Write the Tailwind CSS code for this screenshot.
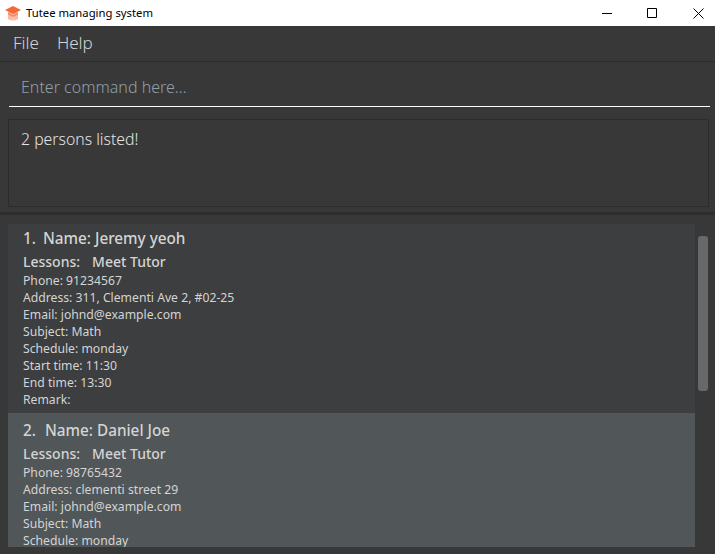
<!DOCTYPE html>
<html lang="en">
<head>
  <meta charset="UTF-8" />
  <title>Tutee managing system</title>
  <script src="https://cdn.jsdelivr.net/npm/@tailwindcss/browser@4"></script>
</head>
<body class="font-['Noto_Sans','Open_Sans',sans-serif] bg-[#383838] overflow-hidden">
  <div class="h-[554px] w-[715px] flex flex-col overflow-hidden">
    <!-- Title bar -->
    <div class="h-[26px] bg-white flex items-center shrink-0">
      <svg class="ml-[5px] w-[16px] h-[17px]" viewBox="0 0 16 17">
        <path d="M3 7h10v7q-5 3-10 0z" fill="#f9b9a2"/>
        <path d="M7.500 9h1v7h-1z" fill="#fbd3c4"/>
        <path d="M0 5L8 1 16 5 8 9z" fill="#f4683a"/>
        <path d="M3 7.500L8 10l5-2.500v2L8 12 3 9.500z" fill="#f58a66"/>
      </svg>
      <span class="ml-[5px] text-[11.3px] text-black leading-none">Tutee managing system</span>
      <div class="ml-auto flex items-center">
        <svg class="w-[10px] h-[10px] mr-[35px]" viewBox="0 0 10 10"><path d="M0 5.500h10" stroke="#000" fill="none"/></svg>
        <svg class="w-[10px] h-[10px] mr-[36px]" viewBox="0 0 10 10"><path d="M.5.5h9v9h-9z" stroke="#000" fill="none"/></svg>
        <svg class="w-[11px] h-[11px] mr-[11px]" viewBox="0 0 11 11"><path d="M.5.5l10 10M10.500.5l-10 10" stroke="#000" fill="none"/></svg>
      </div>
    </div>

    <!-- Menu -->
    <div class="h-[36px] shrink-0 flex items-center gap-[18px] pl-[13px] pb-px text-[17px] font-light text-[#d4d4d4] border-b border-[#2c2c2c]">
      <span>File</span>
      <span>Help</span>
    </div>

    <!-- Command box -->
    <div class="h-[45px] shrink-0 ml-[9px] mr-[5px] border-b border-white flex items-center pl-[12px] pt-[5px] text-[16px] font-light text-[#8fa0aa]">
      Enter command here...
    </div>

    <!-- Result box -->
    <div class="h-[88px] shrink-0 mt-[12px] ml-[8px] mr-[6px] border border-[#2c2c2c] pl-[12px] pt-[7px] text-[15.8px] font-light leading-[24px] text-[#e4e4e4]">
      2 persons listed!
    </div>
    <div class="h-[3px] mt-[5px] shrink-0 bg-[#2e2e2e]"></div>

    <!-- Person list -->
    <div class="relative mt-[9px] h-[323px] overflow-hidden shrink-0">
      <div class="ml-[8px] w-[687px] h-[323px] overflow-hidden">
        <div class="h-[189px] bg-[#3c3e3f] pl-[15px] pt-[3px] text-[#d4d4d4]">
          <div class="flex gap-[7px] h-[23px] text-[15.3px] font-medium leading-[22px]"><span>1.</span><span>Name: Jeremy yeoh</span></div>
          <div class="flex gap-[12px] h-[22px] text-[14px] font-medium leading-[24px]"><span>Lessons:</span><span>Meet Tutor</span></div>
          <div class="text-[12.2px] leading-[17px]">
            <p>Phone: 91234567</p>
            <p>Address: 311, Clementi Ave 2, #02-25</p>
            <p>Email: johnd@example.com</p>
            <p>Subject: Math</p>
            <p>Schedule: monday</p>
            <p>Start time: 11:30</p>
            <p>End time: 13:30</p>
            <p>Remark:</p>
          </div>
        </div>
        <div class="h-[134px] overflow-hidden bg-[#515658] pl-[15px] pt-[6px] text-[#d4d4d4]">
          <div class="flex gap-[9px] h-[23px] text-[15.3px] font-medium leading-[22px]"><span>2.</span><span>Name: Daniel Joe</span></div>
          <div class="flex gap-[12px] h-[22px] text-[14px] font-medium leading-[24px]"><span>Lessons:</span><span>Meet Tutor</span></div>
          <div class="text-[12.2px] leading-[17px]">
            <p>Phone: 98765432</p>
            <p>Address: clementi street 29</p>
            <p>Email: johnd@example.com</p>
            <p>Subject: Math</p>
            <p>Schedule: monday</p>
          </div>
        </div>
      </div>
      <!-- Scrollbar thumb -->
      <div class="absolute left-[698px] top-[12px] w-[10px] h-[155px] rounded-[3px] bg-[#686868]"></div>
    </div>
  </div>
</body>
</html>
